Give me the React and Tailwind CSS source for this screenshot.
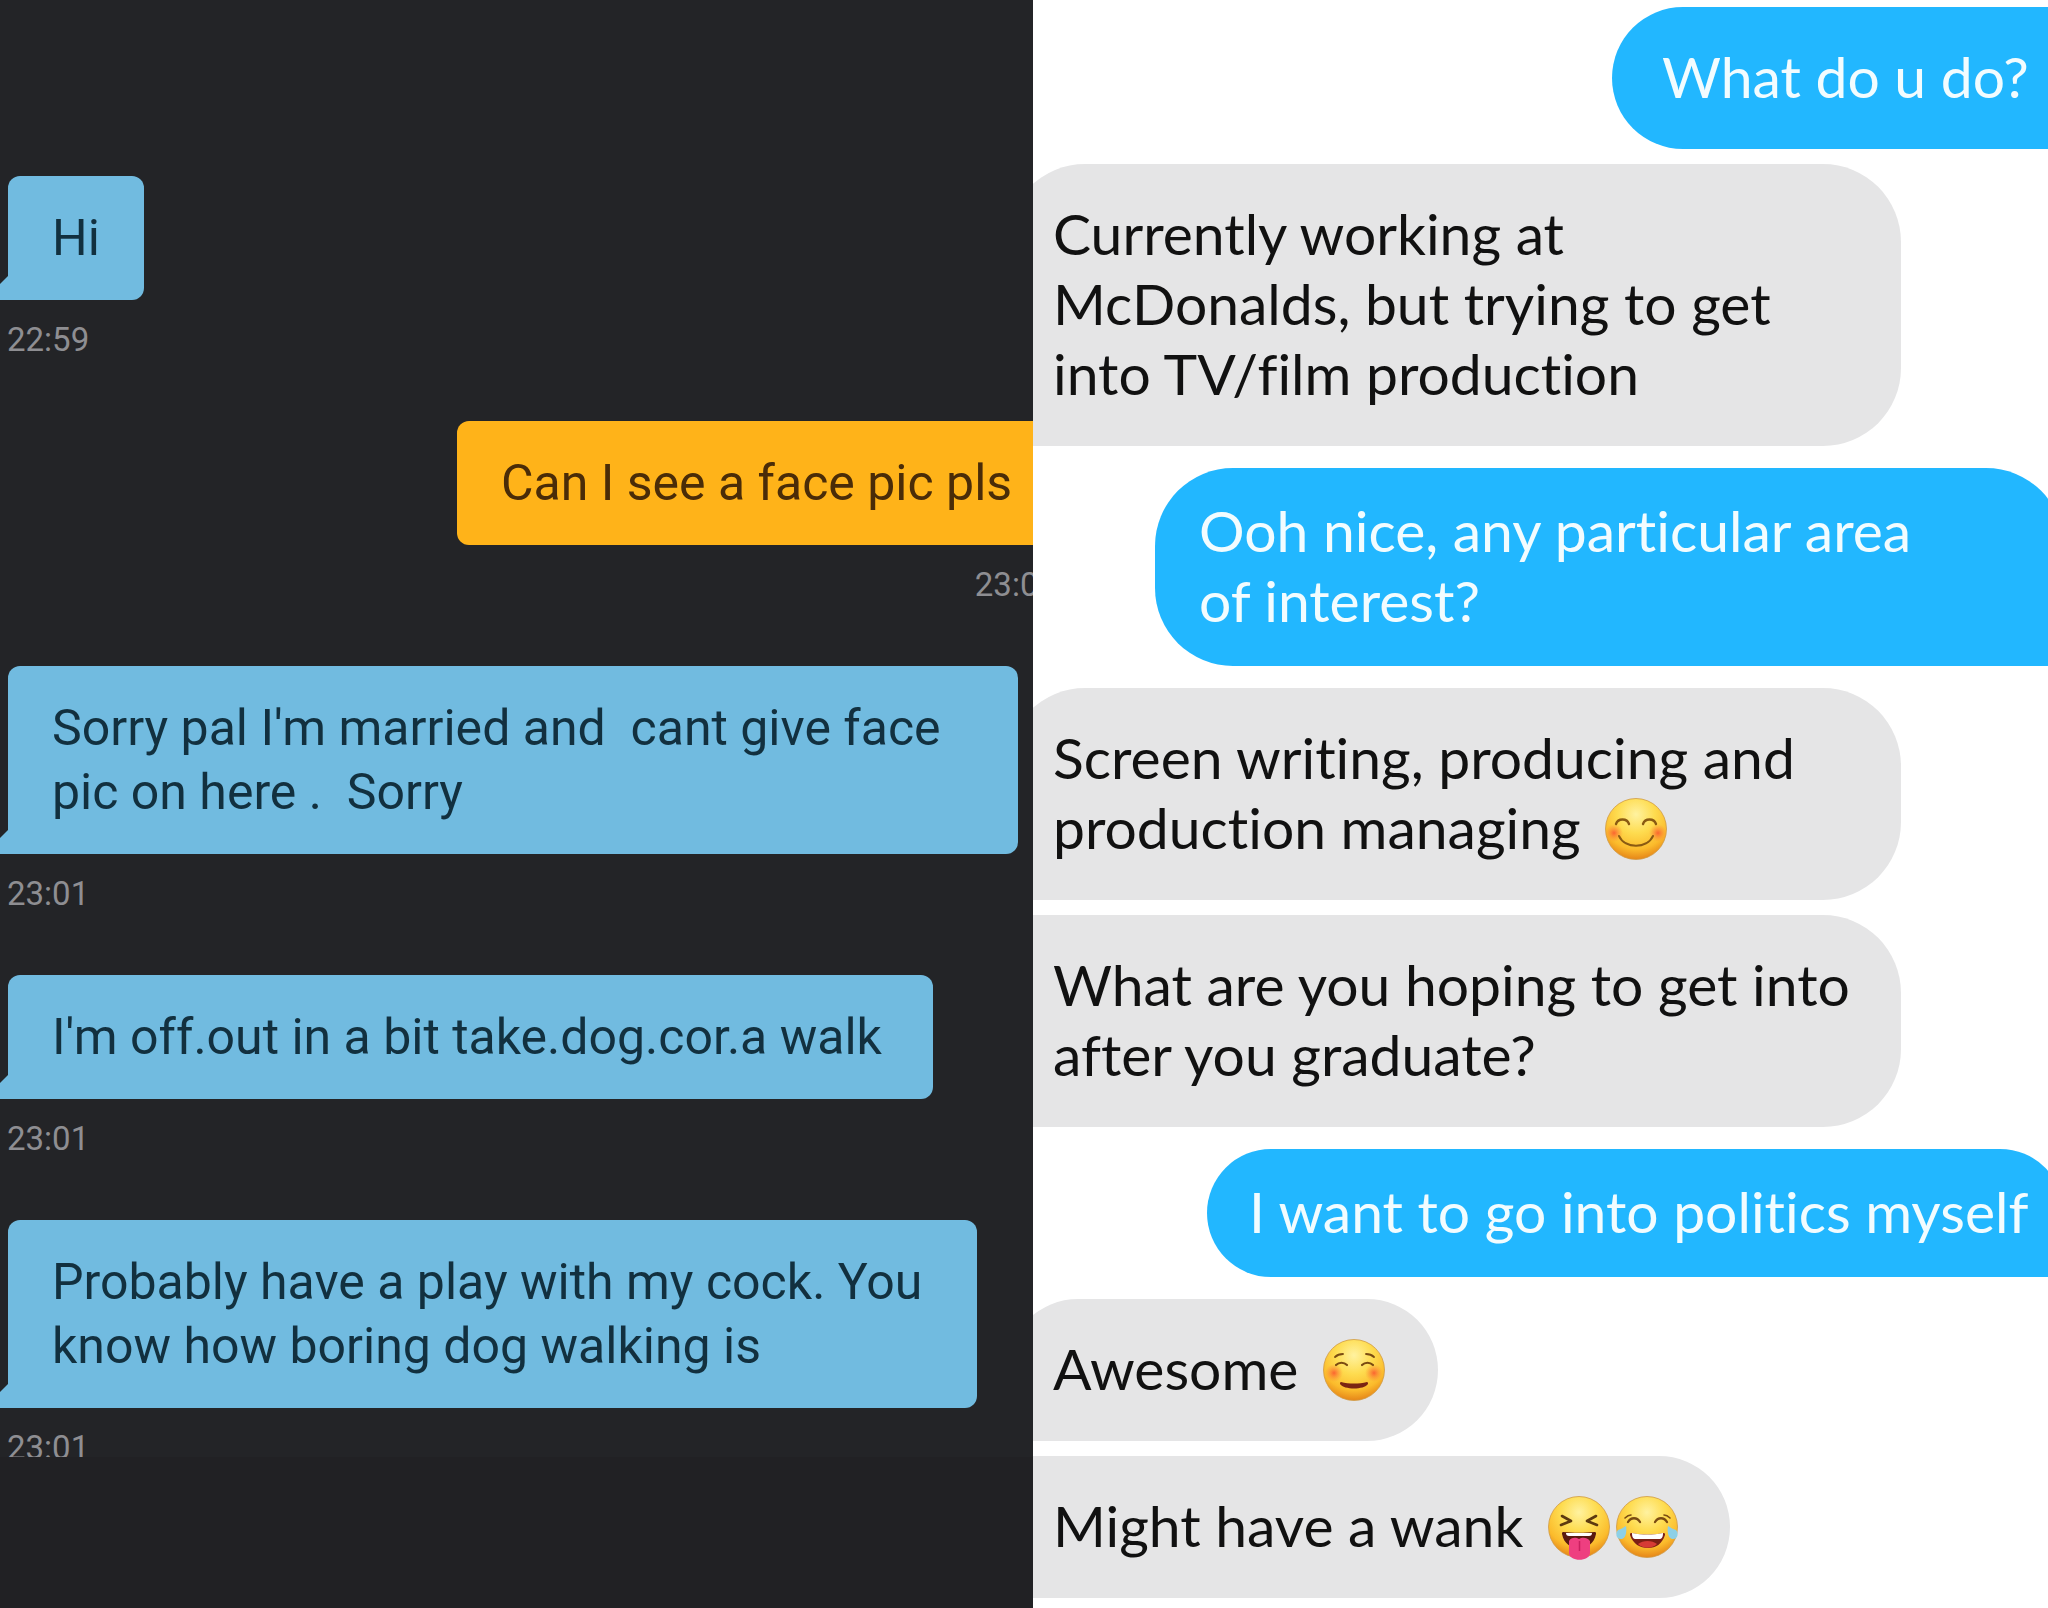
import { clsx } from 'clsx'

const NIGHT_MESSAGES = [
  { id: 1, text: 'Hi', time: '22:59' },
  { id: 2, text: 'Can I see a face pic pls', time: '23:00', own: true },
  { id: 3, text: "Sorry pal I'm married and  cant give face\npic on here .  Sorry", time: '23:01', width: 'w-[1010px]' },
  { id: 4, text: "I'm off.out in a bit take.dog.cor.a walk", time: '23:01', width: 'w-[925px]' },
  { id: 5, text: 'Probably have a play with my cock. You\nknow how boring dog walking is', time: '23:01', width: 'w-[969px]', cut: true },
]

const DAY_MESSAGES = [
  { id: 1, own: true, lines: ['What do u do?'], shape: 'w-[452px] pl-[50px] pt-[34px] pb-[38px] rounded-l-[71px]' },
  { id: 2, lines: ['Currently working at', 'McDonalds, but trying to get', 'into TV/film production'], shape: 'mt-[15px] w-[894px] rounded-[78px] rounded-bl-lg' },
  { id: 3, own: true, lines: ['Ooh nice, any particular area', 'of interest?'], shape: 'mt-[22px] w-[909px] pl-[44px] pt-[27px] pb-[31px] rounded-[78px] rounded-br-lg' },
  { id: 4, lines: ['Screen writing, producing and', 'production managing '], emoji: ['blush'], shape: 'mt-[22px] w-[894px] rounded-[78px] rounded-bl-lg' },
  { id: 5, lines: ['What are you hoping to get into', 'after you graduate?'], shape: 'mt-[15px] w-[894px] rounded-r-[78px]' },
  { id: 6, own: true, lines: ['I want to go into politics myself'], shape: 'mt-[22px] w-[857px] pl-[42px] pt-[27px] pb-[31px] rounded-[64px] rounded-br-lg' },
  { id: 7, lines: ['Awesome '], emoji: ['relaxed'], shape: 'mt-[22px] w-[431px] rounded-[71px] rounded-bl-lg' },
  { id: 8, lines: ['Might have a wank '], emoji: ['squint', 'joy'], shape: 'mt-[15px] w-[723px] rounded-r-[71px]' },
]

const EMOJI_LABELS = {
  blush: 'smiling face with smiling eyes',
  relaxed: 'smiling face',
  squint: 'squinting face with tongue',
  joy: 'face with tears of joy',
}

function Emoji({ name }) {
  const skin = `skin-${name}`
  const cheek = `cheek-${name}`
  return (
    <svg viewBox="0 0 62 62" role="img" aria-label={EMOJI_LABELS[name]} className="inline-block w-[62px] h-[62px] mr-1.5 align-[-11px] overflow-visible">
      <defs>
        <radialGradient id={skin} cx="0.5" cy="0.26" r="0.76">
          <stop offset="0" stopColor="#fff2a0" />
          <stop offset="0.4" stopColor="#fedc50" />
          <stop offset="0.75" stopColor="#fbbb2c" />
          <stop offset="1" stopColor="#e37f16" />
        </radialGradient>
        <radialGradient id={cheek}>
          <stop offset="0" stopColor="#fb5f30" stopOpacity="0.95" />
          <stop offset="1" stopColor="#fb8a35" stopOpacity="0" />
        </radialGradient>
      </defs>
      <circle cx="31" cy="31" r="30.5" fill={`url(#${skin})`} stroke="#cf9a45" strokeWidth="0.8" />
      {name === 'blush' && (
        <>
          <circle cx="9" cy="35" r="9" fill={`url(#${cheek})`} />
          <circle cx="53" cy="35" r="9" fill={`url(#${cheek})`} />
          <g fill="none" stroke="#8a5a12" strokeWidth="2.4" strokeLinecap="round">
            <path d="M11 26c2-6 11-6 13 0M38 26c2-6 11-6 13 0" />
            <path d="M14 38c6 13 28 13 34 0" strokeWidth="2" />
          </g>
        </>
      )}
      {name === 'relaxed' && (
        <>
          <circle cx="11" cy="34" r="9" fill={`url(#${cheek})`} />
          <circle cx="51" cy="34" r="9" fill={`url(#${cheek})`} />
          <g fill="none" stroke="#7a4b12" strokeWidth="2.2" strokeLinecap="round">
            <path d="M13 26c3-3 8-3 11 0M39 26c3-3 8-3 11 0" />
            <path d="M12 18c2-2 4-3 8-3M43 15c4 0 6 1 8 3" strokeWidth="1.8" />
          </g>
          <path d="M18 43c8 2 18 2 26 0 1 0 1 1 1 2-4 6-24 6-28 0 0-1 0-2 1-2Z" fill="#7b2413" />
        </>
      )}
      {name === 'squint' && (
        <>
          <g fill="none" stroke="#5d3a10" strokeWidth="2.6" strokeLinecap="round" strokeLinejoin="round">
            <path d="M14 20l9 5-10 4M48 20l-9 5 10 4" />
          </g>
          <path d="M15 36c10 1 22 1 32 0 1 0 1 1 1 2-2 10-9 14-17 14S16 48 14 38c0-1 0-2 1-2Z" fill="#5a1a10" />
          <path d="M18 37h26c0 2-1 3-3 3H21c-2 0-3-1-3-3Z" fill="#fff" />
          <path d="M21 45c2-4 7-4 10-2 3-2 8-2 11 2v12c0 9-21 9-21 0Z" fill="#ee3f80" />
          <path d="M31.5 45v10" stroke="#c91f5f" strokeWidth="1.5" />
        </>
      )}
      {name === 'joy' && (
        <>
          <g fill="none" stroke="#7a4b12" strokeWidth="2.3" strokeLinecap="round">
            <path d="M12 26c3-5 9-5 12 0M39 26c3-5 9-5 12 0" />
            <path d="M9 22c2-2 4-3 6-3M48 19c2 0 4 1 6 3" strokeWidth="1.6" />
          </g>
          <path d="M15 37c11 2 22 2 33 0 1 0 1 1 1 2-3 9-9 13-17 13S17 48 14 39c0-1 0-2 1-2Z" fill="#7b1f14" />
          <path d="M16 37c11 2 20 2 31 0 0 4-1 6-4 6H20c-3 0-4-2-4-6Z" fill="#fff" />
          <path d="M22 48c5-4 14-4 19 0-5 5-14 5-19 0Z" fill="#d63a35" />
          <path d="M10 30c1 5 0 12-4 13-6 1-7-6-4-9 3-1 5-2 8-4Z" fill="#8dd0e6" />
          <path d="M52 30c-1 5 0 12 4 13 6 1 7-6 4-9-3-1-5-2-8-4Z" fill="#8dd0e6" />
        </>
      )}
    </svg>
  )
}

function NightMessage({ message }) {
  const { text, time, own, width, cut } = message
  return (
    <li className={clsx('flex flex-col', own ? 'items-end' : 'items-start', !cut && 'mb-[61px]')}>
      <div
        className={clsx(
          'relative rounded-xl px-[44px] py-[30px] text-[50px] leading-[64px]',
          own ? '-mr-6 w-[600px] bg-[#ffb319] text-[#4a2c08]' : 'ml-2 rounded-bl-none bg-[#71bbe0] text-[#12303f]',
          width
        )}
      >
        {/* Tail towards the sender */}
        {!own && (
          <svg viewBox="0 0 8 24" className="absolute -left-2 bottom-0 w-2 h-6" aria-hidden="true">
            <path d="M8 0L0 8v16h8Z" fill="#71bbe0" />
          </svg>
        )}
        <p className="whitespace-pre">{text}</p>
      </div>
      <time
        className={clsx(
          'mt-5 text-[33px] leading-[40px] text-[#8e8e92]',
          own ? '-mr-6' : 'ml-[7px]',
          cut && 'h-[29px] overflow-hidden'
        )}
      >
        {time}
      </time>
    </li>
  )
}

function DayMessage({ message }) {
  const { lines, own, emoji = [], shape } = message
  return (
    <li
      className={clsx(
        'text-[57px] leading-[70px] whitespace-pre',
        own ? 'self-end -mr-4 bg-[#22b7ff] text-[#f2fcff]' : 'self-start -ml-[26px] bg-[#e5e5e6] pt-[34px] pb-[38px] pl-[46px] text-[#111]',
        shape
      )}
    >
      {lines.map((line, i) => (
        <p key={line} className="h-[70px]">
          {line}
          {i === lines.length - 1 && emoji.length > 0 && (
            <span className="ml-2.5">
              {emoji.map((name) => <Emoji key={name} name={name} />)}
            </span>
          )}
        </p>
      ))}
    </li>
  )
}

export default function App() {
  return (
    <main className="grid grid-cols-[1033fr_1015fr] min-h-screen overflow-hidden bg-white">
      <section className="overflow-hidden bg-[#212124] font-['Roboto',sans-serif]">
        <ul className="bg-[#232427] pt-44">
          {NIGHT_MESSAGES.map((message) => (
            <NightMessage key={message.id} message={message} />
          ))}
        </ul>
      </section>

      <section className="overflow-hidden bg-white font-['Lato',sans-serif] [font-variant-ligatures:none]">
        <ul className="flex flex-col pt-[7px]">
          {DAY_MESSAGES.map((message) => (
            <DayMessage key={message.id} message={message} />
          ))}
        </ul>
      </section>
    </main>
  )
}
